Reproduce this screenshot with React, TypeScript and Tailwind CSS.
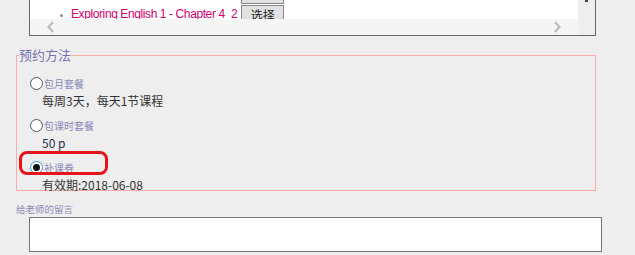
import React from "react";

const cjk = "font-['Noto_Sans_CJK_SC','Noto_Sans',sans-serif]";

const Radio = ({ checked = false }: { checked?: boolean }) => (
  <span
    className={
      "flex h-[13px] w-[13px] shrink-0 items-center justify-center rounded-full bg-white " +
      (checked ? "border-[1.5px] border-[#3a9ad9]" : "border border-[#555]")
    }
  >
    {checked && <span className="h-[7px] w-[7px] rounded-full bg-[#111]" />}
  </span>
);

const Option = ({
  label,
  detail,
  checked,
  dark,
}: {
  label: string;
  detail: string;
  checked?: boolean;
  dark?: boolean;
}) => (
  <div className="flex flex-col">
    <div className="flex h-[13px] items-center pl-[11px]">
      <Radio checked={checked} />
      <span className="ml-px text-[10px] leading-[13px] text-[#8a8ab8]">{label}</span>
    </div>
    <div
      className={
        "mt-[3px] pl-[23px] text-[12px] leading-[16px] " +
        (dark ? "text-[#26324e]" : "text-[#333]")
      }
    >
      {detail}
    </div>
  </div>
);

const App = () => {
  return (
    <div className={"relative h-[255px] w-[635px] overflow-hidden bg-[#eeeeee] " + cjk}>
      {/* list box, scrolled so that only its last row shows */}
      <div className="ml-[29px] flex h-[36px] w-[567px] border border-t-0 border-[#666]">
        <div className="flex flex-1 flex-col">
          <div className="flex h-[19px] items-start overflow-hidden bg-white">
            <span className="ml-[30px] mt-[14px] h-[3px] w-[3px] shrink-0 rounded-full bg-[#8090a8]" />
            <span className="ml-[8px] mt-[6px] whitespace-nowrap font-['Liberation_Sans',sans-serif] text-[12px] leading-[16px] tracking-[-0.4px] text-[#d1006c]">
              Exploring English 1 - Chapter 4_2
            </span>
            <div className="ml-[4px] flex flex-col">
              <span className="h-[4px] w-[43px] border-x border-b border-[#888] bg-[#e1e1e1]" />
              <span className="mt-px flex h-[20px] w-[43px] justify-center border border-[#888] bg-[#e1e1e1] text-[12px] leading-[18px] text-[#222]">
                选择
              </span>
            </div>
          </div>
          <div className="flex h-[16px] items-center justify-between bg-[#f5f5f5] px-[16px]">
            <svg width="10" height="12" viewBox="0 0 10 12">
              <path d="M7 1 L2.5 6 L7 11" fill="none" stroke="#bcbcbc" strokeWidth="2.2" />
            </svg>
            <svg width="10" height="12" viewBox="0 0 10 12">
              <path d="M3 1 L7.5 6 L3 11" fill="none" stroke="#bcbcbc" strokeWidth="2.2" />
            </svg>
          </div>
        </div>
        <div className="flex w-[17px] justify-center bg-[#eeeeee]">
          <span className="h-[2px] w-[3px] bg-[#444]" />
        </div>
      </div>

      <fieldset className="ml-[16px] mt-[11px] h-[144px] w-[580px] border border-[#ffaaaa] px-[2px]">
        <legend className="text-[13px] leading-[16px] text-[#7474b4]">预约方法</legend>
        <div className="flex flex-col gap-[10px] pt-[14px]">
          <Option label="包月套餐" detail="每周3天，每天1节课程" />
          <Option label="包课时套餐" detail="50 p" dark />
          <Option label="补课券" detail="有效期:2018-06-08" checked />
        </div>
      </fieldset>

      <div className="ml-[16px] mt-[12px] text-[9.5px] leading-[12px] text-[#8a8ab8]">给老师的留言</div>
      <div className="ml-[29px] mt-[2px] h-[35px] w-[573px] border-[1.5px] border-[#777] bg-white" />

      {/* red annotation around the selected option */}
      <div className="absolute left-[19px] top-[151px] h-[24px] w-[89px] rounded-[8px] border-[3px] border-[#e5141d]" />
    </div>
  );
};

export default App;
